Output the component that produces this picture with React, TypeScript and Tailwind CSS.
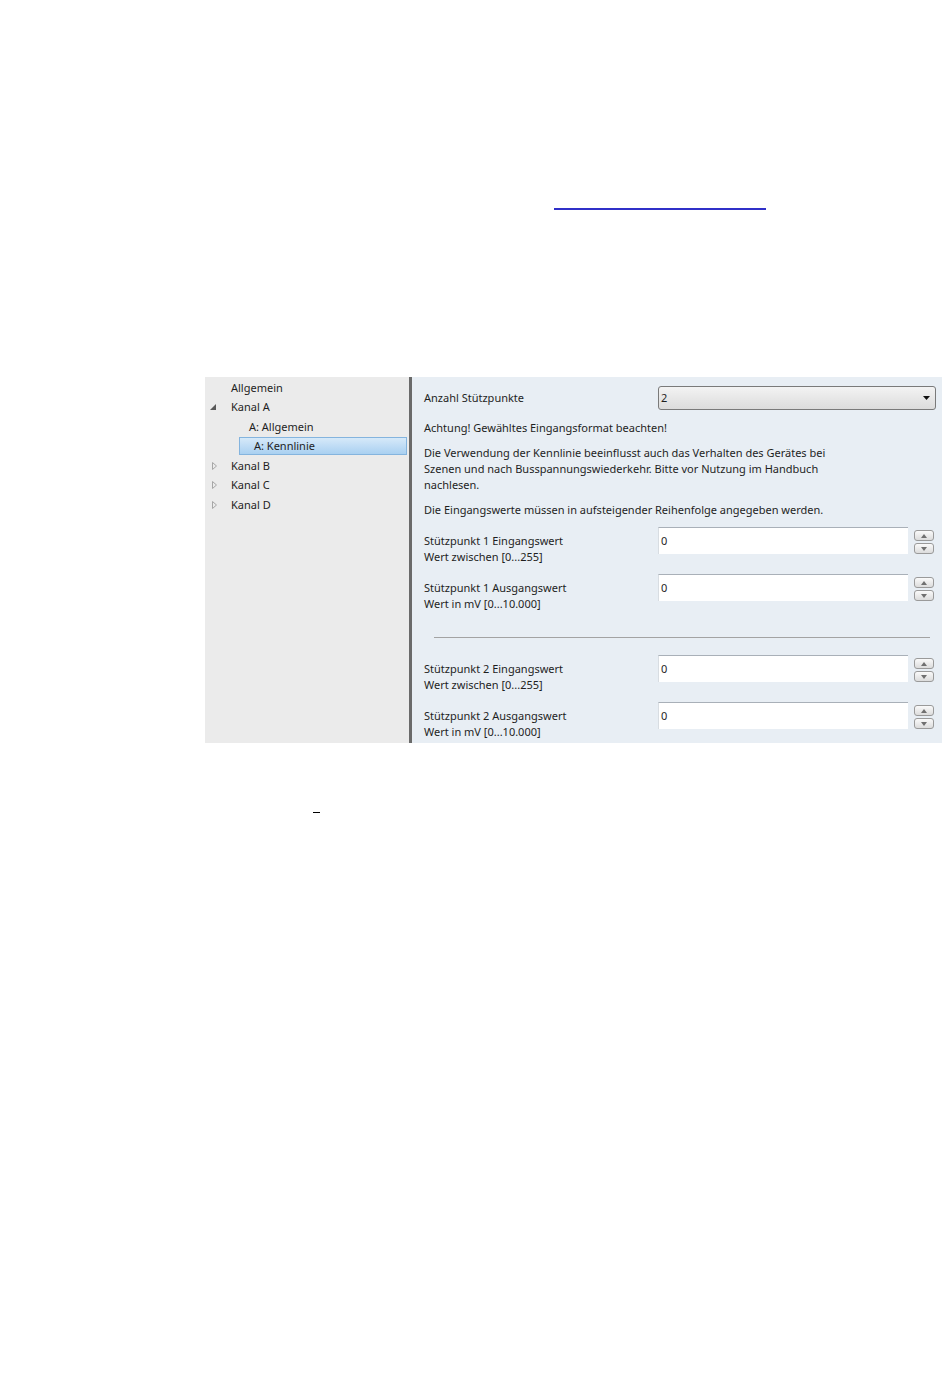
// Parameter dialog: tree on the left, parameter form on the right
const font = "font-['Noto_Sans','Open_Sans',sans-serif]";

function TreeArrow({ open }: { open?: boolean }) {
  if (open) {
    return (
      <svg width="8" height="8" viewBox="0 0 8 8" className="mr-[14px]">
        <path d="M7 1 L7 7 L1 7 Z" fill="#595959" />
      </svg>
    );
  }
  return (
    <svg width="8" height="8" viewBox="0 0 8 8" className="mr-[12px] ml-[2px]">
      <path d="M1.5 0.5 L5.5 4 L1.5 7.5 Z" fill="none" stroke="#a6a6a6" strokeWidth="1" />
    </svg>
  );
}

function TreeRow({
  label,
  arrow,
  indent = 0,
}: {
  label: string;
  arrow?: "open" | "closed";
  indent?: number;
}) {
  return (
    <div className="h-[19.5px] flex items-center" style={{ paddingLeft: 4 + indent }}>
      {arrow ? <TreeArrow open={arrow === "open"} /> : <span className="w-[22px]" />}
      <span>{label}</span>
    </div>
  );
}

function Spinner() {
  return (
    <div className="flex flex-col gap-[2px] ml-[6px] pt-[3px]">
      <div className="w-[20px] h-[11px] rounded-[3px] border border-[#9a9a9a] bg-gradient-to-b from-[#fafafa] to-[#dcdcdc] flex items-center justify-center">
        <svg width="6" height="4" viewBox="0 0 6 4">
          <path d="M0 4 L3 0 L6 4 Z" fill="#707070" />
        </svg>
      </div>
      <div className="w-[20px] h-[11px] rounded-[3px] border border-[#9a9a9a] bg-gradient-to-b from-[#fafafa] to-[#dcdcdc] flex items-center justify-center">
        <svg width="6" height="4" viewBox="0 0 6 4">
          <path d="M0 0 L6 0 L3 4 Z" fill="#707070" />
        </svg>
      </div>
    </div>
  );
}

function NumberRow({ title, hint, className = "" }: { title: string; hint: string; className?: string }) {
  return (
    <div className={"flex h-[38px] " + className}>
      <div className="w-[234px] pt-[6px] leading-[16px]">
        <div>{title}</div>
        <div>{hint}</div>
      </div>
      <div className="w-[250px] h-[27px] bg-white border-t border-t-[#a9b0b8] border-l border-l-[#d8dde2] flex items-center pl-[2px]">
        0
      </div>
      <Spinner />
    </div>
  );
}

export default function App() {
  return (
    <div className={"w-[950px] h-[1379px] bg-white text-[#1e1e1e] text-[11px] " + font}>
      <div className="pt-[208px] pl-[554px]">
        <div className="h-[2px] w-[212px] bg-[#3030c8]" />
      </div>

      <div className="mt-[167px] ml-[205px] w-[737px] h-[366px] flex">
        <div className="w-[204px] bg-[#ebebeb] pt-[1px]">
          <TreeRow label="Allgemein" />
          <TreeRow label="Kanal A" arrow="open" />
          <TreeRow label="A: Allgemein" indent={18} />
          <div className="h-[19.5px] flex items-center pl-[34px] pr-[2px]">
            <div className="h-[18px] w-full flex items-center pl-[14px] border border-[#84b4de] bg-gradient-to-b from-[#d6e9f9] to-[#a9d0f1]">
              A: Kennlinie
            </div>
          </div>
          <TreeRow label="Kanal B" arrow="closed" />
          <TreeRow label="Kanal C" arrow="closed" />
          <TreeRow label="Kanal D" arrow="closed" />
        </div>

        <div className="w-[3px] bg-[#6a6a6a]" />

        <div className="flex-1 bg-[#e8eef4] pl-[12px] pr-[6px]">
          <div className="mt-[9px] h-[24px] flex items-center">
            <div className="w-[234px]">Anzahl Stützpunkte</div>
            <div className="flex-1 h-[24px] rounded-[3px] border border-[#7a7a7a] bg-gradient-to-b from-[#f3f3f3] to-[#dcdcdc] flex items-center justify-between pl-[2px] pr-[5px]">
              <span>2</span>
              <svg width="7" height="4" viewBox="0 0 7 4">
                <path d="M0 0 L7 0 L3.5 4 Z" fill="#111" />
              </svg>
            </div>
          </div>

          <div className="mt-[10px] leading-[16px]">Achtung! Gewähltes Eingangsformat beachten!</div>

          <div className="mt-[9px] leading-[16px] w-[410px]">
            Die Verwendung der Kennlinie beeinflusst auch das Verhalten des Gerätes bei Szenen und nach
            Busspannungswiederkehr. Bitte vor Nutzung im Handbuch nachlesen.
          </div>

          <div className="mt-[9px] leading-[16px]">
            Die Eingangswerte müssen in aufsteigender Reihenfolge angegeben werden.
          </div>

          <NumberRow className="mt-[9px]" title="Stützpunkt 1 Eingangswert" hint="Wert zwischen [0...255]" />
          <NumberRow className="mt-[9px]" title="Stützpunkt 1 Ausgangswert" hint="Wert in mV [0...10.000]" />

          <div className="mt-[25px] ml-[10px] w-[496px] h-[1px] bg-[#a3a3a3]" />

          <NumberRow className="mt-[17px]" title="Stützpunkt 2 Eingangswert" hint="Wert zwischen [0...255]" />
          <NumberRow className="mt-[9px]" title="Stützpunkt 2 Ausgangswert" hint="Wert in mV [0...10.000]" />
        </div>
      </div>

      <div className="mt-[69px] ml-[313px] w-[7px] h-[1px] bg-black" />
    </div>
  );
}
